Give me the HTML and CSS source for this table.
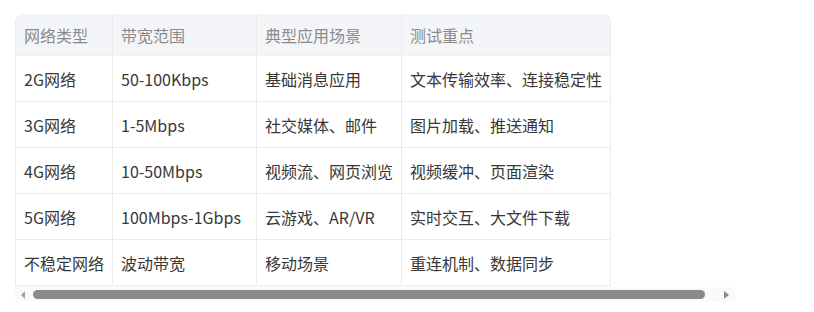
FILE: index.html
```html
<!DOCTYPE html>
<html lang="zh-CN">
<head>
<meta charset="utf-8">
<link rel="stylesheet" href="styles.css">
</head>
<body>
<div class="page">
  <div class="scroller">
    <div class="inner">
      <table class="net-table">
        <thead>
          <tr><th class="c1">网络类型</th><th class="c2">带宽范围</th><th class="c3">典型应用场景</th><th class="c4">测试重点</th></tr>
        </thead>
        <tbody>
          <tr><td>2G网络</td><td>50-100Kbps</td><td>基础消息应用</td><td>文本传输效率、连接稳定性</td></tr>
          <tr><td>3G网络</td><td>1-5Mbps</td><td>社交媒体、邮件</td><td>图片加载、推送通知</td></tr>
          <tr><td>4G网络</td><td>10-50Mbps</td><td>视频流、网页浏览</td><td>视频缓冲、页面渲染</td></tr>
          <tr><td>5G网络</td><td>100Mbps-1Gbps</td><td>云游戏、AR/VR</td><td>实时交互、大文件下载</td></tr>
          <tr><td>不稳定网络</td><td>波动带宽</td><td>移动场景</td><td>重连机制、数据同步</td></tr>
        </tbody>
      </table>
    </div>
    <div class="hbar">
      <span class="arrow arrow-left"></span>
      <span class="track"><span class="thumb"></span></span>
      <span class="arrow arrow-right"></span>
    </div>
  </div>
</div>
</body>
</html>
```
FILE: styles.css
```css
html, body {
  margin: 0;
  padding: 0;
  background: #ffffff;
}
.page {
  padding: 14px 0 0 15px;
}
.scroller {
  width: 720px;
  overflow: hidden;
}
.inner {
  width: 739px;
}
.net-table {
  border-collapse: separate;
  border-spacing: 0;
  font-family: "Noto Sans CJK SC", "Noto Sans", sans-serif;
  font-size: 16px;
  color: #383838;
  border-left: 1px solid #ebebeb;
  border-top-left-radius: 8px;
  border-top-right-radius: 8px;
}
.net-table th,
.net-table td {
  text-align: left;
  white-space: nowrap;
  border-right: 1px solid #ebebeb;
  border-bottom: 1px solid #ebebeb;
  line-height: 24px;
}
.net-table th {
  background: #f4f5f9;
  color: #8a8a8a;
  font-weight: 400;
  padding: 9px 8px 8px 8px;
  border-bottom: 1px solid #eeeff3;
}
.net-table th.c1 { border-top-left-radius: 8px; width: 79px; }
.net-table th.c2 { width: 127px; }
.net-table th.c3 { width: 128px; }
.net-table th.c4 { border-top-right-radius: 8px; width: 192px; }
.net-table td {
  padding: 11px 8px 10px 8px;
}
.hbar {
  display: flex;
  align-items: center;
  height: 15px;
  margin-top: 1px;
  background: #fafafa;
}
.arrow {
  width: 0;
  height: 0;
  flex: none;
}
.arrow-left {
  margin-left: 6px;
  border-top: 4px solid transparent;
  border-bottom: 4px solid transparent;
  border-right: 4px solid #a3a3a3;
}
.arrow-right {
  margin-left: 19px;
  margin-right: 6px;
  border-top: 4px solid transparent;
  border-bottom: 4px solid transparent;
  border-left: 5px solid #8a8a8a;
}
.track {
  flex: 1;
  display: flex;
  align-items: center;
  padding-left: 8px;
}
.thumb {
  display: block;
  width: 672px;
  height: 9px;
  border-radius: 5px;
  background: #8a8a8a;
}
```
